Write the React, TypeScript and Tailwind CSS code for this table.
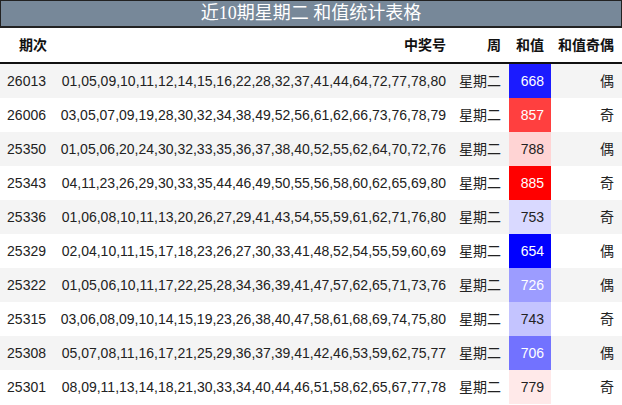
const rows = [
  { id: "26013", nums: "01,05,09,10,11,12,14,15,16,22,28,32,37,41,44,64,72,77,78,80", sum: 668, bg: "bg-[#1b1bff]", light: true },
  { id: "26006", nums: "03,05,07,09,19,28,30,32,34,38,49,52,56,61,62,66,73,76,78,79", sum: 857, bg: "bg-[#ff3f3f]", light: true },
  { id: "25350", nums: "01,05,06,20,24,30,32,33,35,36,37,38,40,52,55,62,64,70,72,76", sum: 788, bg: "bg-[#ffd4d4]", light: false },
  { id: "25343", nums: "04,11,23,26,29,30,33,35,44,46,49,50,55,56,58,60,62,65,69,80", sum: 885, bg: "bg-[#ff0000]", light: true },
  { id: "25336", nums: "01,06,08,10,11,13,20,26,27,29,41,43,54,55,59,61,62,71,76,80", sum: 753, bg: "bg-[#d9d9ff]", light: false },
  { id: "25329", nums: "02,04,10,11,15,17,18,23,26,27,30,33,41,48,52,54,55,59,60,69", sum: 654, bg: "bg-[#0000ff]", light: true },
  { id: "25322", nums: "01,05,06,10,11,17,22,25,28,34,36,39,41,47,57,62,65,71,73,76", sum: 726, bg: "bg-[#9c9cff]", light: true },
  { id: "25315", nums: "03,06,08,09,10,14,15,19,23,26,38,40,47,58,61,68,69,74,75,80", sum: 743, bg: "bg-[#c4c4ff]", light: false },
  { id: "25308", nums: "05,07,08,11,16,17,21,25,29,36,37,39,41,42,46,53,59,62,75,77", sum: 706, bg: "bg-[#7272ff]", light: true },
  { id: "25301", nums: "08,09,11,13,14,18,21,30,33,34,40,44,46,51,58,62,65,67,77,78", sum: 779, bg: "bg-[#ffe9e9]", light: false },
]

const cols = "grid grid-cols-[54px_401px_54px_42px_71px]"

export default function App() {
  return (
    <div className="w-[622px] h-[405px] overflow-hidden bg-white text-[14px] text-[#222] font-['Liberation_Sans','Noto_Sans_CJK_SC',sans-serif]">
      {/* Title */}
      <div className="h-[28px] bg-[#778899] border border-b-2 border-[#222] flex items-center justify-center text-white text-[18px] font-['Liberation_Serif','Noto_Sans_CJK_SC',serif]">
        近10期星期二 和值统计表格
      </div>

      {/* Header */}
      <div className={`${cols} h-[36px] border-b-2 border-[#111] font-bold text-[#111]`}>
        <div className="flex items-center justify-end pr-[7px]">期次</div>
        <div className="flex items-center justify-end pr-[9px]">中奖号</div>
        <div className="flex items-center justify-end pr-[8px]">周</div>
        <div className="flex items-center justify-end pr-[7px]">和值</div>
        <div className="flex items-center justify-end pr-[8px]">和值奇偶</div>
      </div>

      {/* Rows */}
      {rows.map((r, i) => (
        <div key={r.id} className={`${cols} h-[34px] ${i % 2 === 0 ? "bg-[#f4f4f4]" : "bg-white"}`}>
          <div className="flex items-center justify-end pr-[8px]">{r.id}</div>
          <div className="flex items-center justify-end pr-[9px]">{r.nums}</div>
          <div className="flex items-center justify-end pr-[8px]">星期二</div>
          <div className={`flex items-center justify-end pr-[7px] ${r.bg} ${r.light ? "text-white" : "text-[#222]"}`}>
            {r.sum}
          </div>
          <div className="flex items-center justify-end pr-[8px]">{r.sum % 2 === 0 ? "偶" : "奇"}</div>
        </div>
      ))}
    </div>
  )
}
